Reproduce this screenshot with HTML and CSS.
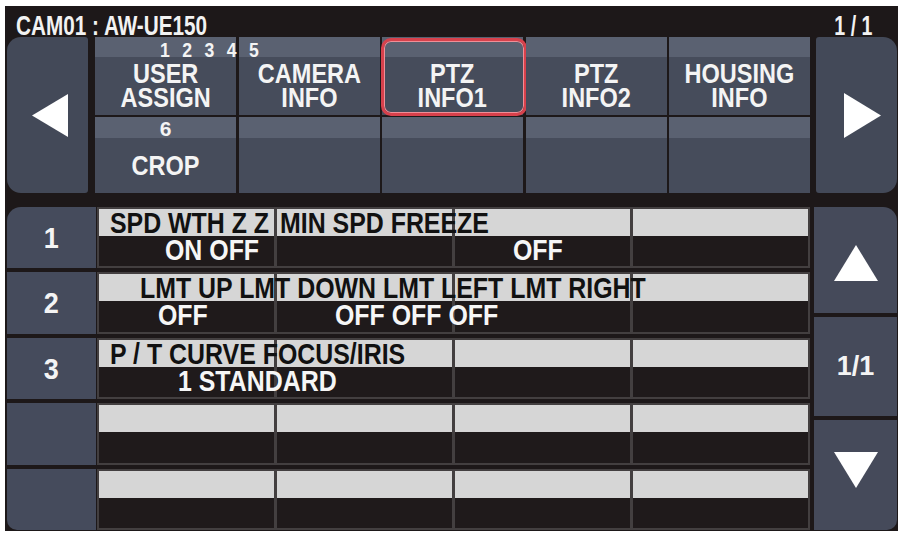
FILE: index.html
```html
<!DOCTYPE html>
<html>
<head>
<meta charset="utf-8">
<link rel="stylesheet" href="styles.css">
</head>
<body>
<div class="screen">
  <div class="header">
    <span class="title">CAM01 : AW-UE150</span>
    <span class="page">1 / 1</span>
  </div>
  <div class="top">
    <div class="nav nav-left">
      <svg width="36" height="43" viewBox="0 0 36 43"><polygon points="0,21.5 36,0 36,43" fill="#fff"/></svg>
    </div>
    <div class="tabs">
      <div class="tab">
        <div class="strip"><span class="nums">1 2 3 4 5</span></div>
        <div class="tab-body"><span class="tx">USER<br>ASSIGN</span></div>
      </div>
      <div class="tab">
        <div class="strip"></div>
        <div class="tab-body"><span class="tx">CAMERA<br>INFO</span></div>
      </div>
      <div class="tab selected">
        <div class="strip"></div>
        <div class="tab-body"><span class="tx">PTZ<br>INFO1</span></div>
      </div>
      <div class="tab">
        <div class="strip"></div>
        <div class="tab-body"><span class="tx">PTZ<br>INFO2</span></div>
      </div>
      <div class="tab">
        <div class="strip"></div>
        <div class="tab-body"><span class="tx">HOUSING<br>INFO</span></div>
      </div>
      <div class="tab row2">
        <div class="strip"><span class="strip-center">6</span></div>
        <div class="tab-body"><span class="tx">CROP</span></div>
      </div>
      <div class="tab row2"><div class="strip"></div><div class="tab-body"></div></div>
      <div class="tab row2"><div class="strip"></div><div class="tab-body"></div></div>
      <div class="tab row2"><div class="strip"></div><div class="tab-body"></div></div>
      <div class="tab row2"><div class="strip"></div><div class="tab-body"></div></div>
    </div>
    <div class="nav nav-right">
      <svg width="37" height="45" viewBox="0 0 37 45"><polygon points="0,0 37,22.5 0,45" fill="#fff"/></svg>
    </div>
  </div>
  <div class="bottom">
    <div class="rownums">
      <div class="rownum first"><span class="rn">1</span></div>
      <div class="rownum"><span class="rn">2</span></div>
      <div class="rownum"><span class="rn">3</span></div>
      <div class="rownum"></div>
      <div class="rownum last"></div>
    </div>
    <div class="data">
      <div class="drow">
        <div class="cell">
          <div class="lbl"><span class="t dark-t off-11">SPD WTH Z Z</span></div>
          <div class="val"><span class="t off-66">ON OFF</span></div>
        </div>
        <div class="cell">
          <div class="lbl"><span class="t dark-t off-3">MIN SPD FREEZE</span></div>
          <div class="val"></div>
        </div>
        <div class="cell">
          <div class="lbl"></div>
          <div class="val"><span class="t off-58">OFF</span></div>
        </div>
        <div class="cell"><div class="lbl"></div><div class="val"></div></div>
      </div>
      <div class="drow">
        <div class="cell">
          <div class="lbl"><span class="t dark-t off-41">LMT UP LMT DOWN LMT LEFT LMT RIGHT</span></div>
          <div class="val"><span class="t off-59">OFF</span></div>
        </div>
        <div class="cell">
          <div class="lbl"></div>
          <div class="val"><span class="t off-58">OFF OFF OFF</span></div>
        </div>
        <div class="cell"><div class="lbl"></div><div class="val"></div></div>
        <div class="cell"><div class="lbl"></div><div class="val"></div></div>
      </div>
      <div class="drow">
        <div class="cell">
          <div class="lbl"><span class="t dark-t off-11">P / T CURVE FOCUS/IRIS</span></div>
          <div class="val"><span class="t off-79">1 STANDARD</span></div>
        </div>
        <div class="cell"><div class="lbl"></div><div class="val"></div></div>
        <div class="cell"><div class="lbl"></div><div class="val"></div></div>
        <div class="cell"><div class="lbl"></div><div class="val"></div></div>
      </div>
      <div class="drow">
        <div class="cell"><div class="lbl"></div><div class="val"></div></div>
        <div class="cell"><div class="lbl"></div><div class="val"></div></div>
        <div class="cell"><div class="lbl"></div><div class="val"></div></div>
        <div class="cell"><div class="lbl"></div><div class="val"></div></div>
      </div>
      <div class="drow">
        <div class="cell"><div class="lbl"></div><div class="val"></div></div>
        <div class="cell"><div class="lbl"></div><div class="val"></div></div>
        <div class="cell"><div class="lbl"></div><div class="val"></div></div>
        <div class="cell"><div class="lbl"></div><div class="val"></div></div>
      </div>
    </div>
    <div class="scroll">
      <div class="sbtn up">
        <svg width="44" height="36" viewBox="0 0 44 36"><polygon points="22,0 44,36 0,36" fill="#fff"/></svg>
      </div>
      <div class="sbtn mid">1/1</div>
      <div class="sbtn down">
        <svg width="44" height="36" viewBox="0 0 44 36"><polygon points="0,0 44,0 22,36" fill="#fff"/></svg>
      </div>
    </div>
  </div>
</div>
</body>
</html>
```

FILE: styles.css
```css
body {
  margin: 0;
  background: #ffffff;
  font-family: "Liberation Sans", Arial, sans-serif;
  font-weight: bold;
}

.screen {
  margin: 6px 0 0 5px;
  width: 893px;
  height: 525px;
  box-sizing: border-box;
  padding: 0 1px 1px 2px;
  background: #1d1819;
  display: flex;
  flex-direction: column;
}

.header {
  height: 31px;
  flex: none;
  display: flex;
  justify-content: space-between;
  align-items: flex-end;
  padding: 0 25px 0 9px;
  color: #f2f2f2;
  font-size: 28px;
  line-height: 22px;
}

.title {
  display: inline-block;
  white-space: nowrap;
  transform: scaleX(0.74);
  transform-origin: left center;
}

.page {
  display: inline-block;
  white-space: nowrap;
  transform: scaleX(0.7);
  transform-origin: right center;
}

.top {
  height: 156px;
  flex: none;
  display: flex;
  gap: 7px;
}

.nav {
  width: 81px;
  flex: none;
  background: #434958;
  display: flex;
  align-items: center;
  justify-content: center;
  box-sizing: border-box;
}

.nav-left {
  border-radius: 14px 3px 3px 14px;
  padding-left: 5px;
}

.nav-right {
  border-radius: 3px 14px 14px 3px;
  padding-left: 12px;
  margin-left: -1px;
}

.tabs {
  width: 715px;
  flex: none;
  display: grid;
  grid-template-columns: repeat(5, minmax(0, 1fr));
  grid-template-rows: 78px 76px;
  gap: 2px 2.5px;
}

.tab {
  display: flex;
  flex-direction: column;
  background: #464c5b;
  color: #f4f4f4;
  position: relative;
  min-width: 0;
}

.strip {
  height: 20px;
  flex: none;
  background: #5a6171;
  font-size: 21px;
  line-height: 20px;
  white-space: nowrap;
  display: flex;
}

.row2 .strip {
  height: 21px;
}

.nums {
  display: inline-block;
  margin: 3px 0 0 65px;
  word-spacing: 9px;
  position: relative;
  z-index: 1;
  transform: scaleX(0.84);
  transform-origin: left center;
}

.strip-center {
  flex: 1;
  text-align: center;
  padding-top: 2px;
}

.tab-body {
  flex: 1;
  display: flex;
  align-items: center;
  justify-content: center;
  text-align: center;
  font-size: 28px;
  line-height: 24px;
}

.tx {
  display: inline-block;
  white-space: nowrap;
  transform: scaleX(0.84);
  transform-origin: center;
}

.selected::after {
  content: "";
  position: absolute;
  top: 1px;
  left: -1px;
  right: -4px;
  bottom: -1px;
  border: 3px solid #d8414c;
  border-radius: 10px;
  box-shadow: inset 0 0 0 1px #ef8f97;
}

.bottom {
  margin-top: 14px;
  flex: 1;
  min-height: 0;
  display: flex;
}

.rownums {
  width: 89px;
  flex: none;
  margin-right: 1px;
  display: flex;
  flex-direction: column;
  gap: 4px;
}

.rownum {
  flex: 1;
  background: #454b5c;
  color: #f4f4f4;
  font-size: 30px;
  display: flex;
  align-items: center;
  justify-content: center;
}

.rn {
  display: inline-block;
  transform: scaleX(0.9);
}

.rownum.first {
  border-top-left-radius: 14px;
}

.rownum.last {
  border-bottom-left-radius: 10px;
}

.data {
  width: 713px;
  flex: none;
  display: flex;
  flex-direction: column;
  gap: 4px;
}

.drow {
  flex: 1;
  background: #433f40;
  padding: 2px;
  display: grid;
  grid-template-columns: repeat(4, minmax(0, 1fr));
  gap: 3px;
}

.cell {
  display: flex;
  flex-direction: column;
  min-width: 0;
}

.lbl {
  height: 27px;
  flex: none;
  background: #d6d6d6;
  display: flex;
}

.val {
  flex: 1;
  background: #1f1a1b;
  display: flex;
}

.t {
  display: inline-block;
  position: relative;
  z-index: 1;
  white-space: nowrap;
  font-size: 30px;
  line-height: 27px;
  color: #f6f6f6;
  transform: scaleX(0.83);
  transform-origin: left center;
}

.dark-t {
  color: #111111;
}

.off-3 { margin-left: 3px; }
.off-11 { margin-left: 11px; }
.off-41 { margin-left: 41px; }
.off-58 { margin-left: 58px; }
.off-59 { margin-left: 59px; }
.off-66 { margin-left: 66px; }
.off-79 { margin-left: 79px; }

.scroll {
  width: 83px;
  flex: none;
  margin-left: 4px;
  display: flex;
  flex-direction: column;
  gap: 4px;
}

.sbtn {
  flex: 1;
  background: #454a5a;
  color: #f4f4f4;
  display: flex;
  align-items: center;
  justify-content: center;
}

.sbtn.up {
  border-top-right-radius: 14px;
  padding-top: 6px;
}

.sbtn.down {
  border-bottom-right-radius: 10px;
  padding-bottom: 10px;
}

.sbtn.mid {
  font-size: 27px;
}
```
